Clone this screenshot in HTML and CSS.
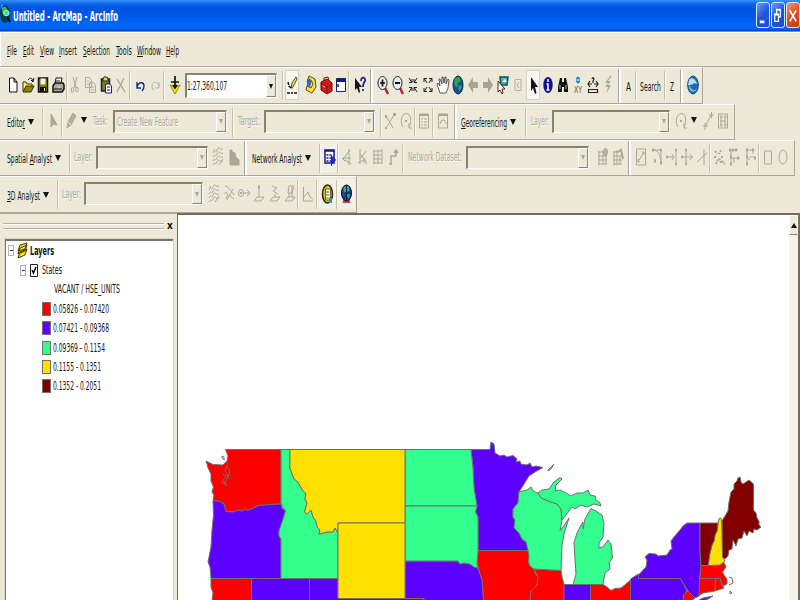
FILE: index.html
```html
<!DOCTYPE html>
<html lang="en">
<head>
<meta charset="utf-8">
<title>Untitled - ArcMap - ArcInfo</title>
<link rel="stylesheet" href="styles.css">
</head>
<body>
<header class="titlebar">
  <svg class="app-icon" viewBox="0 0 12 22"><ellipse cx="5.500" cy="11" rx="5.500" ry="9.500" fill="#063c4b"/><path d="M2 4 6 3 9 8 6 13 3 11Z" fill="#26c454"/><circle cx="7" cy="10" r="3" fill="#50db8a" stroke="#c3f5dd"/><path d="m8 14 3 6" stroke="#021433" stroke-width="2"/><path d="M1 3 3 1" stroke="#cbe" /></svg>
  <h1 class="fit" data-w="105">Untitled - ArcMap - ArcInfo</h1>
  <div class="window-buttons">
    <svg class="wbtn" viewBox="0 0 13 26"><path d="M3 19h5v3H3z" fill="#fff"/></svg>
    <svg class="wbtn" viewBox="0 0 13 26"><path d="M5 11V7h4v8H7M3 12h4v8H3z" fill="none" stroke="#fff" stroke-width="1.300"/><path d="M5 7.500h4M3 12.500h4" stroke="#fff" stroke-width="2"/></svg>
    <svg class="wbtn close" viewBox="0 0 13 26"><path d="m3 8 7 12M10 8 3 20" stroke="#fff" stroke-width="1.700"/></svg>
  </div>
</header>
<nav class="menu">
  <span class="fit" data-w="10"><u>F</u>ile</span><span class="fit" data-w="11"><u>E</u>dit</span><span class="fit" data-w="14"><u>V</u>iew</span><span class="fit" data-w="18"><u>I</u>nsert</span><span class="fit" data-w="27"><u>S</u>election</span><span class="fit" data-w="16"><u>T</u>ools</span><span class="fit" data-w="24"><u>W</u>indow</span><span class="fit" data-w="13"><u>H</u>elp</span>
</nav>

<section class="bar standard">
  <svg><use href="#new"/></svg><svg><use href="#open"/></svg><svg><use href="#save"/></svg><svg><use href="#print"/></svg><i class="sep"></i>
  <svg><use href="#cut"/></svg><svg><use href="#copy"/></svg><svg><use href="#paste"/></svg><svg><use href="#delete"/></svg><i class="sep"></i>
  <svg><use href="#undo"/></svg><svg><use href="#redo"/></svg><i class="sep"></i>
  <svg><use href="#add"/></svg>
  <div class="combo live"><span class="fit" data-w="40">1:27,360,107</span><b></b></div><i class="sep"></i>
  <svg class="pressed"><use href="#sketch"/></svg><svg><use href="#catalog"/></svg><svg><use href="#toolbox"/></svg><svg class="commands"><use href="#window"/></svg><i class="sep"></i>
  <svg><use href="#help"/></svg><i class="grip"></i>
  <svg><use href="#zoomin"/></svg><svg><use href="#zoomout"/></svg><svg><use href="#fixin"/></svg><svg><use href="#fixout"/></svg><svg><use href="#hand"/></svg><svg><use href="#globe"/></svg><svg><use href="#back"/></svg><svg><use href="#forward"/></svg><svg><use href="#select"/></svg><svg><use href="#unselect"/></svg>
  <svg class="pressed"><use href="#pointer"/></svg><svg><use href="#info"/></svg><svg><use href="#find"/></svg><svg><use href="#xy"/></svg><svg><use href="#measure"/></svg><svg><use href="#bolt"/></svg><i class="grip inset"></i>
  <span class="fit mid" data-w="5">A</span><i class="sep"></i><span class="fit mid" data-w="21">Search</span><i class="sep"></i><span class="fit mid" data-w="4">Z</span><i class="grip inset"></i>
  <svg><use href="#earth"/></svg>
</section>

<section class="bar editor">
  <span class="fit" data-w="18">Edito<u>r</u></span><b class="arrow"></b><i class="sep"></i>
  <svg class="off"><use href="#play"/></svg><i class="sep"></i><svg class="off"><use href="#pencil"/></svg><b class="arrow up"></b>
  <span class="fit dim" data-w="15">Task:</span><div class="combo"><span class="fit dim" data-w="61">Create New Feature</span><b></b></div><i class="sep"></i>
  <span class="fit dim" data-w="22">Target:</span><div class="combo"><b></b></div><i class="sep"></i>
  <svg class="off"><use href="#split"/></svg><svg class="off"><use href="#rotate"/></svg><i class="sep"></i><svg class="off"><use href="#table"/></svg><i class="sep"></i><svg class="off"><use href="#props"/></svg><i class="grip inset"></i>
  <span class="fit" data-w="46"><u>G</u>eoreferencing</span><b class="arrow"></b><i class="sep"></i>
  <span class="fit dim" data-w="18">Layer:</span><div class="combo"><b></b></div>
  <svg class="off"><use href="#rotate"/></svg><b class="arrow up"></b><svg class="off"><use href="#link"/></svg><svg class="off"><use href="#table2"/></svg>
</section>

<section class="bar spatial">
  <span class="fit" data-w="45">Spatial <u>A</u>nalyst</span><b class="arrow"></b><i class="sep"></i>
  <span class="fit dim" data-w="19">Layer:</span><div class="combo"><b></b></div><svg class="off"><use href="#contour"/></svg><svg class="off"><use href="#histogram"/></svg><i class="grip inset"></i>
  <span class="fit" data-w="50">Network Analyst</span><b class="arrow"></b><i class="sep"></i>
  <svg class="lit"><use href="#nawindow"/></svg><i class="sep"></i>
  <svg class="off"><use href="#na1"/></svg><svg class="off"><use href="#na2"/></svg><svg class="off"><use href="#grid"/></svg><svg class="off"><use href="#route"/></svg><i class="sep"></i>
  <span class="fit dim" data-w="54">Network Dataset:</span><div class="combo"><b></b></div>
  <svg class="off"><use href="#gridid"/></svg><svg class="off"><use href="#gridbuild"/></svg><i class="grip inset"></i>
  <svg class="off"><use href="#t1"/></svg><svg class="off"><use href="#t2"/></svg><svg class="off"><use href="#t3"/></svg><svg class="off"><use href="#t4"/></svg><svg class="off"><use href="#t5"/></svg><i class="sep"></i>
  <svg class="off"><use href="#t6"/></svg><svg class="off"><use href="#t7"/></svg><svg class="off"><use href="#t8"/></svg><i class="sep"></i>
  <svg class="off"><use href="#rect"/></svg><svg class="off"><use href="#oval"/></svg>
</section>

<section class="bar three-d">
  <span class="fit" data-w="33"><u>3</u>D Analyst</span><b class="arrow"></b><i class="sep"></i>
  <span class="fit dim" data-w="19">Layer:</span><div class="combo"><b></b></div>
  <svg class="off"><use href="#contour"/></svg><svg class="off"><use href="#steep"/></svg><svg class="off"><use href="#sight"/></svg><svg class="off"><use href="#point3d"/></svg><svg class="off"><use href="#line3d"/></svg><svg class="off"><use href="#poly3d"/></svg><i class="sep"></i>
  <svg class="off"><use href="#profile"/></svg><i class="sep"></i><svg class="lit"><use href="#scene"/></svg><i class="sep"></i><svg class="lit"><use href="#arcglobe"/></svg>
</section>

<main class="workspace">
  <aside class="toc">
    <div class="toc-head"><div class="rails"></div><span class="toc-close">x</span></div>
    <div class="tree">
      <div class="row root"><i class="minus"></i><svg class="layers" viewBox="0 0 11 17"><path d="m3 10 7-3-2 6-7 3zM3 6l7-3-2 6-7 3zM3 3l7-2-2 6-7 2z" fill="#ffe600" stroke="#443a00"/></svg><strong class="fit" data-w="24">Layers</strong></div>
      <div class="row layer"><i class="minus"></i><svg class="check" viewBox="0 0 8 13"><path d="M.5.500h7v12h-7z" fill="#fff" stroke="#222"/><path d="m2 6 1.500 3L6 3" fill="none" stroke="#000" stroke-width="1.500"/></svg><span class="fit" data-w="20">States</span></div>
      <div class="row field"><span class="fit" data-w="66">VACANT / HSE_UNITS</span></div>
      <div class="row cls"><i class="swatch red"></i><span class="fit" data-w="56">0.05826 - 0.07420</span></div>
      <div class="row cls"><i class="swatch violet"></i><span class="fit" data-w="56">0.07421 - 0.09368</span></div>
      <div class="row cls"><i class="swatch green"></i><span class="fit" data-w="52">0.09369 - 0.1154</span></div>
      <div class="row cls"><i class="swatch yellow"></i><span class="fit" data-w="48">0.1155 - 0.1351</span></div>
      <div class="row cls"><i class="swatch maroon"></i><span class="fit" data-w="48">0.1352 - 0.2051</span></div>
    </div>
  </aside>
  <div class="map">
    <svg class="states" viewBox="178 215 611 385">
      <g class="red">
        <path d="M225.500 449.500H281V504L270 504.500 259 505.500 252 508.500 248 510.500 245 509.500 242 511 238 510 234 512 226 511.500 224 504 220 501.500 213 500.500 214 495 212 492 213.500 487 211 481 211 474 208 468 207 464 206 461 209 462.500 213 464.500 223 465 227 461 228 456z"/>
        <path d="M211 578.500H251.500V601H212L213 593 211 587z"/>
        <path d="M478 550.500H528L529 556 528.500 562 530 566 534 569 535 573 538 577 538 582 534 589 531 591 530 601H483.500L482 580 479 570 477 563z"/>
        <path d="M534 569 561 570.500 562 577 564 584.500V601H530L531 591 537 585 538 577z"/>
        <path d="M590.500 584.500H603L607 587 611 590.500 615 588.500 621 588 626 584 630.500 580V601H590.500z"/>
        <path d="M683 601 684 593 688 591 695 598 691 601z"/>
        <path d="M700 565.500 720 565 724 562.500 726 567 722.500 572 724 575 727 579 727 584 723 586 720 578.500H700z"/>
        <path d="M699.500 578.500H716L715 591 703 593 697 597z"/><path d="m716 578.500 4-.5 2 7 2 3-9 3z"/>
      </g>
      <g class="violet">
        <path d="M213 500.500 220 501.500 224 504 226 511.500 234 512 238 510 242 511 245 509.500 248 510.500 252 508.500 259 505.500 270 504.500 281 504 282 508 285.500 511 283 519 279 531 279 536 281 539V578.500H211L210 567 208 562 211 547 212 530 213.500 515z"/>
        <path d="M251.500 578.500h58V601h-58zM309.500 578.500H338V598.500H424V601H309.500z"/>
        <path d="M405 561H458L460 564 464 563 470 564 474 567 478 568 482 580 483.500 601H424V598.500H405z"/>
        <path d="M471 449.500H490L491 442 494 444 495 453 500 456 504 455 507 457 513 455.500 517 459 516 462 520 461 521 464 527 465 530 463 532 467 536 466 543 467.500 535 472 529 476 524 484 519 492 518 503 513 509 513 517 515 520 514 528 519 533 522 539 526 542 528 550.500H478V517L475.500 512 477 506 474 488 473 468z"/>
        <path d="M564 584.500h26.500V601H564z"/>
        <path d="M687 523H700V551L701 565.500 699.500 578.500 699 596 695 598 688 591 684 585 680.500 578.500H638.500V575L646 567 647 560 645 557 649 553.500 656 554 658 556 667 555 670 550 672 549 671 541 674 537 680 530 683 526z"/>
        <path d="M630.500 579 638.500 574V578.500H680.500L684 585 687 591 683 596 684 601H630.500z"/>
        <path d="m697 601 6-3 10-2-5 3-5 2z"/>
      </g>
      <g class="green">
        <path d="M281 449.500H290V468L294 479 298 482 303 491 306 493.500 305 499 307 503 304.500 512 307 514 311 510 313 517 316 521 317 527 320 530 319 534 327 532 333 532 335 528 338 533V578.500H281V539L279 536 279 531 283 519 285.500 511 281 504z"/>
        <path d="M405 449.500H471L473 468 474 488 477 506H405z"/>
        <path d="M405 506H477L475.500 512 478 517V550.500L477 563 478 568 474 567 470 564 464 563 460 564 458 561H405z"/>
        <path d="M519 492 527 490 531 487 533 491 538 493 541 498 551 502 557 504 561 509 562 520 560 531 563 527 569 518 564 534 562 545 561 570.500 534 569 530 566 528.500 562 529 556 528 550.500 526 542 522 539 519 533 514 528 515 520 513 517 513 509 518 503z"/>
        <path d="M538 493 542 490 549 489 554 482 560 477.500 562 479 556 485 555 491 560 490 566 493 571 496 577 493 583 493 588 490 590 495 595 496 596 500 600 503 601 506 594 504 587 507 581 505 575 509 572 507 566 515 562 520 561 509 557 504 551 502 541 498z"/>
        <path d="M591 508.500 596 511 602 515 604 524 603 537 599 543 599 548 603 547 608 540 611 544 612.500 558 609 563 610 569 605 573 603 584.500H573L576 574 575 560 574 543 577 533 581 525 583 522 583 529 585 519z"/>
        <path d="m548 470 6-6-3 5-3 2z"/>
      </g>
      <g class="yellow">
        <path d="M290 449.500H405V523H338V533L335 528 333 532 327 532 319 534 320 530 317 527 316 521 313 517 311 510 307 514 304.500 512 307 503 305 499 306 493.500 303 491 298 482 294 479 290 468z"/>
        <path d="M338 523h67v75.500h-67z"/>
        <path d="M718 523 719 518.500 721 518 722 523 722.500 557 725 561 720 565 708 565.500 710 553 712 545 714 541 715 535 717 531z"/>
      </g>
      <g class="maroon">
        <path d="M700 523H718L717 531 715 535 714 541 712 545 710 553 708 565.500H701L700 551z"/>
        <path d="M722.500 557 722 521 725 516 728 511 729 502 731 492 734 489 734 484 737 481 738 478 740 477 741 482 743 484 749 480 753.500 484 753.500 510 756 513 757 518 759 521 759 525 761 527 757 530 754 529 753 533 749 531 747 536 744 531 742 538 738 539 736 546 733 540 732 549 729 550 728 556 725 559z"/>
      </g>
      <g class="coast"><path d="m222 456 2 1v3l-2-2zM226 462l2 3-3 5 3 5-5 5 3 5-5-3M227 467l3 3-2 9M223 474l5 3-3 5 2 4M729 577l3 1 1 5-4 2M730 591l2 2-2 1z"/></g>
    </svg>
    <div class="scroll"><div class="scroll-up"></div></div>
  </div>
</main>

<svg class="defs">
  <symbol id="new" viewBox="0 0 14 22"><path d="M3.500 4h4.500l3 4v10H3.500zM8 4v4h3" fill="#fff" stroke="#111"/></symbol>
  <symbol id="open" viewBox="0 0 14 22"><path d="M2 17V8h3l1 2h5v3" fill="#ffff7a" stroke="#332f00"/><path d="m2 18 3-6h8l-3 6z" fill="#8b8500" stroke="#332f00"/><path d="M7 6c2-3 4-2 5 1m-2-1 2 2 1-4" fill="none" stroke="#111"/></symbol>
  <symbol id="save" viewBox="0 0 14 22"><path d="M2.500 4h9v14h-9z" fill="#807b00" stroke="#111" stroke-width="1.500"/><path d="M4.500 4.500h5v6h-5z" fill="#eee"/><path d="M4 13h6v5H4z" fill="#111"/><path d="M8 14h1v3H8z" fill="#fff"/></symbol>
  <symbol id="print" viewBox="0 0 14 22"><path d="m4 10 1-6h6l-1 6" fill="#fff" stroke="#111"/><path d="m2 12 2-3h8l1 2v4l-2 3H2z" fill="#aaa" stroke="#111" stroke-width="1.500"/><path d="M3 15h8M5 7h4" stroke="#111"/><path d="M7 13h2" stroke="#ee0" stroke-width="1.500"/></symbol>
  <symbol id="cut" viewBox="0 0 14 22"><path d="m5 3 3 11m1-11L6 14" stroke="#aaa898"/><ellipse cx="4.500" cy="16" rx="1.300" ry="2.500" fill="none" stroke="#aaa898"/><ellipse cx="9" cy="15.500" rx="1.300" ry="2.500" fill="none" stroke="#aaa898"/></symbol>
  <symbol id="copy" viewBox="0 0 14 22"><path d="M2.500 3.500h4l2 3v7h-6zM6.500 8.500h4l2 3v7h-6z" fill="#ece9d8" stroke="#aaa898"/><path d="M4 7h2M4 10h2M8 13h3M8 16h3" stroke="#aaa898"/></symbol>
  <symbol id="paste" viewBox="0 0 14 22"><path d="M2.500 5h8v12h-8z" fill="#7d7a20" stroke="#222" stroke-width="1.500"/><path d="M4 7V5l1-2h3l1 2v2z" fill="#ddd86a" stroke="#222"/><path d="M6.500 10h4l2 2v7h-6z" fill="#fff" stroke="#0b1d96"/><path d="M8 13h3M8 16h3" stroke="#0b1d96"/></symbol>
  <symbol id="delete" viewBox="0 0 14 22"><path d="m3 5 8 13M10 4 3 18" stroke="#a5a292" stroke-width="1.300"/></symbol>
  <symbol id="undo" viewBox="0 0 14 22"><path d="M4 13c2-6 7-5 7-1 0 3-1 4-2 5M4 8v6h4" fill="none" stroke="#102ba8" stroke-width="1.400"/></symbol>
  <symbol id="redo" viewBox="0 0 14 22"><path d="M10 12C8 6 3 8 3 12c0 3 1 4 2 4M10 8v6H6" fill="none" stroke="#b4b1a2"/></symbol>
  <symbol id="add" viewBox="0 0 14 22"><path d="m2 11 5 9 5-9-5 2z" fill="#ffe800" stroke="#99890a"/><path d="M7 2v11M3 8h8M5 11l2 3 2-3" fill="none" stroke="#111" stroke-width="1.700"/></symbol>
  <symbol id="sketch" viewBox="0 0 14 22"><path d="m6 14 1-5 4-6 1 2-4 8z" fill="#ffe64f" stroke="#443"/><path d="m3 8 1 4 3 3M2 19h3m1 0h2m1 0h3" stroke="#111" stroke-width="1.500" fill="none" stroke-dasharray="3 1"/></symbol>
  <symbol id="catalog" viewBox="0 0 14 22"><path d="m3 8 2-6 6 3 1 8-4 6-6-3 1-4 4 2 2-4-2-4z" fill="#ffe23b" stroke="#594e08"/><path d="m3 8 2-4 3 3-2 6-3-1z" fill="#396ab5"/></symbol>
  <symbol id="toolbox" viewBox="0 0 14 22"><path d="m2 8 6-3 5 4v8l-5 3-6-4z" fill="#d91717" stroke="#6b0808"/><path d="M5 7V4l4-1 1 4M3 9l5 4 5-3M8 13v6" fill="none" stroke="#711"/><path d="m4 12 2 1" stroke="#fff"/></symbol>
  <symbol id="window" viewBox="0 0 14 22"><path d="M2.500 4.500h9v13h-9z" fill="#fff" stroke="#112475"/><path d="M2 5h10v3H2z" fill="#112475"/><path d="M4 10v3" stroke="#112475" stroke-width="1.500"/></symbol>
  <symbol id="help" viewBox="0 0 14 22"><path d="m2 4v12l2-2 2 5 1-1-1-5h3z" fill="#111"/><path d="M8 7c0-5 5-4 4 0-1 2-2 2-2 6m0 2v2" fill="none" stroke="#141d8d" stroke-width="1.700"/></symbol>
  <symbol id="zoomin" viewBox="0 0 14 22"><path d="m9 14 3 6" stroke="#b4242c" stroke-width="2.500"/><ellipse cx="6.500" cy="9" rx="4.500" ry="6.500" fill="#e8ecef" stroke="#222"/><path d="M4 9h5M6.500 5.500v7" stroke="#111" stroke-width="1.700"/></symbol>
  <symbol id="zoomout" viewBox="0 0 14 22"><path d="m9 14 3 6" stroke="#b4242c" stroke-width="2.500"/><ellipse cx="6.500" cy="9" rx="4.500" ry="6.500" fill="#e8ecef" stroke="#222"/><path d="M4 9h5" stroke="#111" stroke-width="2"/></symbol>
  <symbol id="fixin" viewBox="0 0 14 22"><path d="m3 4 2.500 4M11 4 8.500 8M3 18l2.500-4M11 18l-2.500-4M3 8.500h3V5M11 8.500H8V5M3 13.500h3V17M11 13.500H8V17" fill="none" stroke="#222"/></symbol>
  <symbol id="fixout" viewBox="0 0 14 22"><path d="m3 4 3 5M11 4 8 9M3 18l3-5M11 18l-3-5M3 8V4.500h3M11 8V4.500H8M3 14v3.500h3M11 14v3.500H8" fill="none" stroke="#222"/></symbol>
  <symbol id="hand" viewBox="0 0 14 22"><path d="m4 19-2-6-1-3 1-1 2 3-1-7h1l2 5V3h1l1 6 1-6h1v7l2-5 1 1-1 8-2 5z" fill="#fff" stroke="#333" stroke-width=".8"/></symbol>
  <symbol id="globe" viewBox="0 0 14 22"><ellipse cx="7" cy="11" rx="5" ry="9" fill="#174da3" stroke="#10264d"/><path d="m4 4 4-1 2 4-3 2-1 5-3-4zM8 11l3 1-2 5-2-2z" fill="#2ba64b"/></symbol>
  <symbol id="back" viewBox="0 0 14 22"><path d="m2 11 5-8v5h5v6H7v5z" fill="#a7a493"/></symbol>
  <symbol id="forward" viewBox="0 0 14 22"><path d="m12 11-5-8v5H2v6h5v5z" fill="#a7a493"/></symbol>
  <symbol id="select" viewBox="0 0 14 22"><path d="M4 3h8l-1 8H5z" fill="#36c1c9" stroke="#174950" stroke-width="1.500"/><path d="m6 8 3-3 2 3z" fill="#fff"/><path d="M2 7v11l2-2 2 4 1-1-1-4h3z" fill="#fff" stroke="#522"/></symbol>
  <symbol id="unselect" viewBox="0 0 14 22"><path d="M4 5.500h6v11H4zM8 8l-2 3 2 3" fill="none" stroke="#b3b09f"/></symbol>
  <symbol id="pointer" viewBox="0 0 14 22"><path d="M5 3v14l2-3 2 6 1.500-1L9 13h3z" fill="#111"/></symbol>
  <symbol id="info" viewBox="0 0 14 22"><ellipse cx="7" cy="11" rx="4.700" ry="8" fill="#12138f"/><path d="M7 5v3M5.500 10H7v6m-1.500 0h3" fill="none" stroke="#fff" stroke-width="1.500"/></symbol>
  <symbol id="find" viewBox="0 0 14 22"><path d="M4 4h2v4h2V4h2l2 9v5H8v-5H6v5H2v-5z" fill="#151515"/><path d="M4 11v4M10 11v4" stroke="#bbb"/></symbol>
  <symbol id="xy" viewBox="0 0 14 22"><ellipse cx="7" cy="6" rx="2" ry="3.500" fill="#2387d8"/><path d="M5.500 6h3" stroke="#fff"/><text x="3" y="19" font-size="8" textLength="8" lengthAdjust="spacingAndGlyphs" fill="#665138">XY</text></symbol>
  <symbol id="measure" viewBox="0 0 14 22"><path d="M2.500 15.500h9v3h-9zM2 10h4m2 0h4M4 7l-2 3 2 3m6-6 2 3-2 3M6 5c1-3 3 0 1 2v2" fill="none" stroke="#222" stroke-width="1.200"/></symbol>
  <symbol id="bolt" viewBox="0 0 14 22"><path d="M9 2 4 9h3l-3 4h3l-2 7 5-9H7l3-4H7l4-5z" fill="#b0ad9d"/></symbol>
  <symbol id="earth" viewBox="0 0 14 22"><ellipse cx="7" cy="11" rx="5.300" ry="9" fill="#1a6db4" stroke="#17477c"/><path d="M3 6c3-4 7 0 8 4-2-1-4-1-5 1-1-1-3 1-4 0z" fill="#b5dcf0"/><path d="M4 12c1 4 5 5 7 3-2 4-8 4-8-3z" fill="#7db5de"/></symbol>

  <symbol id="play" viewBox="0 0 14 22"><path d="M5 4v13l2-3 4 1z" fill="#aaa798"/></symbol>
  <symbol id="pencil" viewBox="0 0 14 22"><path d="m3 18 1-6 5-9 3 3-5 9z" fill="#b2af9f"/><path d="m4 12 3 3" stroke="#ece9d8"/></symbol>
  <symbol id="split" viewBox="0 0 14 22"><path d="m3 18 8-13M3 6l7 12"/><path d="M10 4h2v2M3 5v3M2 18h2" stroke-width="2"/></symbol>
  <symbol id="rotate" viewBox="0 0 14 22"><path d="M4 17C1 13 2 4 7 3.500S13 12 10 17M10 13v5h3"/><path d="M6 11h2" stroke-width="2"/></symbol>
  <symbol id="table" viewBox="0 0 14 22"><path d="M2.500 4h9v14h-9zM4 9h2m1 0h3M4 12h2m1 0h3M4 15h2m1 0h3"/><path d="M2 5h10" stroke-width="2"/></symbol>
  <symbol id="table2" viewBox="0 0 14 22"><path d="M2.500 4h9v14h-9zM4 7h3m1 0h3M4 11h6M4 15h3m1 0h3M5 5v12M9 5v12"/></symbol>
  <symbol id="props" viewBox="0 0 14 22"><path d="M2.500 4h9v14h-9zM4 14l2-4h2l3 4"/><path d="M2 5h10" stroke-width="2"/></symbol>
  <symbol id="link" viewBox="0 0 14 22"><path d="m4 17 6-12M2 16h5M4 13v7M8 5h5M10.500 2v6"/></symbol>
  <symbol id="contour" viewBox="0 0 14 22"><path d="M2 7c2-5 2 2 4-3s3 1 6-1M2 11c2-5 2 2 4-3s3 1 6-1M2 15c2-5 2 2 4-3s3 1 6-1M2 19c2-5 2 2 4-3s3 1 6-1M8 19l4-6M4 3 2 5"/></symbol>
  <symbol id="histogram" viewBox="0 0 14 22"><path d="M3 19V4h2v2l3 1 1 4 3 3v5z" fill="#aaa798"/></symbol>
  <symbol id="nawindow" viewBox="0 0 14 22"><path d="M2.500 4h9v13h-9z" fill="#fff" stroke="#15148f" stroke-width="1.500"/><path d="M2 5h10M4 9h2m1 0h2M4 12h2m1 0h2M4 15h2m1 0h2" stroke="#15148f" stroke-width="1.500"/><path d="M9 9v11M9 10l4 4-4 4" fill="#2626d8" stroke="#2020c0"/></symbol>
  <symbol id="na1" viewBox="0 0 14 22"><path d="m3 13 7-9M9 3v16M3 12h8M5 14l6 4M2 12l3 3"/></symbol>
  <symbol id="na2" viewBox="0 0 14 22"><path d="M4 3v15M4 8l7 8M4 13l6-8M2 17l5-3 4 4M8 12v5"/></symbol>
  <symbol id="grid" viewBox="0 0 14 22"><path d="M2 5h9M2 9h9M2 13h9M2 17h9M3 4v14M7 4v14M11 3v15"/></symbol>
  <symbol id="route" viewBox="0 0 14 22"><path d="M4 18v-8h5V4M7 7l2-3 2 3M2 18h3" stroke-width="1.500"/></symbol>
  <symbol id="gridid" viewBox="0 0 14 22"><path d="M2 6h6M2 10h9M2 14h9M2 18h9M3 5v14M7 4v15M10 9v10"/><ellipse cx="9.500" cy="6" rx="2" ry="3.500" fill="#b6b3a4"/></symbol>
  <symbol id="gridbuild" viewBox="0 0 14 22"><path d="M2 6h5M2 10h9M2 14h9M2 18h9M3 5v14M6 4v15M9 11v8"/><path d="m7 6 3-2 2 9" stroke-width="2"/></symbol>
  <symbol id="t1" viewBox="0 0 14 22"><path d="M2.500 3h9v16h-9zM4 16l6-10M8 6h2v3M4 13v3h2"/></symbol>
  <symbol id="t2" viewBox="0 0 14 22"><path d="M2 4h9M4 4c5 1 6 5 7 12M11 4v14M4 14h2"/><path d="M2 4h2M10 4h2M10 17h2M4 15h2" stroke-width="3"/></symbol>
  <symbol id="t3" viewBox="0 0 14 22"><path d="M1 11h8M11 3v16M7 8l2 3-2 3"/><path d="M1 11h2M10 4h2M10 18h2" stroke-width="2.500"/></symbol>
  <symbol id="t4" viewBox="0 0 14 22"><path d="M2 11h11M6 4v15M10 8l2 3-2 3"/><path d="M5 4h2M5 18h2M1 11h2" stroke-width="2.500"/></symbol>
  <symbol id="t5" viewBox="0 0 14 22"><path d="m2 16 10-9M9 3v16"/></symbol>
  <symbol id="t6" viewBox="0 0 14 22"><path d="m3 5 2 3m4-4L7 8m-5 3h3m4 0h3M4 18l2-5m3 4-2-5m3 3 3 3" stroke-width="2" stroke-dasharray="2 1"/></symbol>
  <symbol id="t7" viewBox="0 0 14 22"><path d="M3 4h8M4 4v15M4 12h9M7 12v5"/><path d="M2 4h2m1 0h2m1 0h2M3 11h2M3 18h2M10 12h2" stroke-width="3"/></symbol>
  <symbol id="t8" viewBox="0 0 14 22"><path d="M4 18V4h6v4M6 14c0-4 3-4 6-2"/><path d="M3 4h2m4 0h2M3 11h2M3 18h2M11 12h2" stroke-width="3"/></symbol>
  <symbol id="rect" viewBox="0 0 14 22"><path d="M3.500 5h7v13h-7z"/></symbol>
  <symbol id="oval" viewBox="0 0 14 22"><ellipse cx="7" cy="11" rx="4" ry="7"/></symbol>
  <symbol id="steep" viewBox="0 0 14 22"><path d="M3 3c3 0 6 5 9 9M2 11c3-4 5 0 2 5M5 17l6-11M7 12l5 4"/></symbol>
  <symbol id="sight" viewBox="0 0 14 22"><path d="M6 10h6m-2-3 3 3-3 3"/><ellipse cx="4" cy="10" rx="2.500" ry="3.500"/><path d="M4 9v2" stroke-width="2"/></symbol>
  <symbol id="point3d" viewBox="0 0 14 22"><path d="m2 18 3-4h7l-3 4zM7 5v9"/><path d="M6 4h2" stroke-width="3"/></symbol>
  <symbol id="line3d" viewBox="0 0 14 22"><path d="m2 18 3-4h7l-3 4zM4 3l5 2-4 3 5 3M7 11v3"/></symbol>
  <symbol id="poly3d" viewBox="0 0 14 22"><path d="m2 18 3-4h7l-3 4zM5 10l1-7h5l-2 7zM6 10v4M9 4v10"/></symbol>
  <symbol id="profile" viewBox="0 0 14 22"><path d="M2.500 4v14H12M3 14l4-5 2 5 3 2"/></symbol>
  <symbol id="scene" viewBox="0 0 14 22"><ellipse cx="7" cy="11" rx="5" ry="9" fill="#d3c51e" stroke="#28250b" stroke-width="1.500"/><path d="M5 6h5v11H5z" fill="#fff" stroke="#6c6524"/><path d="M5 9h4M5 12h4M5 15h4" stroke="#6c6524"/><path d="M10 15v5" stroke="#219ac4" stroke-width="3"/></symbol>
  <symbol id="arcglobe" viewBox="0 0 14 22"><path d="m4 16-1 4h8l-1-4" fill="#cf3c31"/><ellipse cx="7" cy="10" rx="5" ry="8" fill="#153f9b" stroke="#111"/><path d="m4 4 5-1 1 5-4 1-2 3M7 12l4-2-2 6z" fill="#2aab90"/><path d="M2.500 10h9M7 2v16" stroke="#122749"/></symbol>
</svg>
<script src="fit.js"></script>
</body>
</html>
```
FILE: styles.css
```css
* { box-sizing: border-box; }
body {
  margin: 0;
  width: 800px;
  height: 600px;
  overflow: hidden;
  display: flex;
  flex-direction: column;
  background: #ece9d8;
  color: #151515;
  font: 13px/16px "DejaVu Sans Condensed", "DejaVu Sans", sans-serif;
}
.defs { display: none; }
.fit { display: block; white-space: nowrap; transform-origin: 0 50%; }
u { text-underline-offset: 1px; text-decoration-thickness: 1px; }

.titlebar {
  flex: 0 0 32px;
  display: flex;
  align-items: center;
  gap: 2px;
  color: #fff;
  background: linear-gradient(#3a93ff 0, #0c62e8 4px, #0054e0 9px, #0058e8 16px, #0066ff 25px, #0060f4 29px, #003dba 31px, #e8e5d6 32px);
}
.app-icon { width: 11px; height: 24px; margin-bottom: 4px; }
h1 { margin: 0; font-size: 14px; font-weight: bold; line-height: 20px; }
.window-buttons { display: flex; gap: 1px; margin: 0 0 2px auto; }
.wbtn {
  width: 14px;
  height: 26px;
  border: 1px solid #dce8ff;
  border-radius: 3px;
  background: linear-gradient(135deg, #6b9cf8, #2056dc 50%, #1c4bc8);
}
.close { background: linear-gradient(135deg, #f09a7c, #e14d24 50%, #c63a12); }

.menu {
  flex: 0 0 35px;
  display: grid;
  grid-template-columns: 16px 17px 19px 24px 33px 21px 29px 20px;
  align-items: center;
  padding: 3px 0 0 7px;
  border-top: 1px solid #fff;
  border-bottom: 1px solid #aca899;
  box-shadow: inset 1px 0 #fff;
}

.bar {
  flex: 0 0 auto;
  display: grid;
  align-items: center;
  justify-items: center;
  align-self: flex-start;
  border: solid;
  border-width: 1px 1px 1px 0;
  border-color: #fff #aca899 #aca899;
}
.bar > svg { width: 14px; height: 22px; margin-bottom: 2px; overflow: visible; }
.bar > .fit { justify-self: start; margin-top: 2px; }
.bar > .mid { justify-self: center; }
.bar > .dim { justify-self: center; margin-top: 0; margin-bottom: 2px; }
.bar > .commands { margin-left: 4px; }
.off { fill: none; stroke: #aaa798; stroke-width: 1; }
.bar > .pressed, .bar > .lit { background: #f8f7f1; height: 30px; padding: 4px 0; }
.bar > .pressed { outline: 1px solid #d4d1c2; outline-offset: -1px; }
.bar > .lit { width: 17px; background: #f3f1e6; }
.sep { width: 2px; height: 29px; border-left: 1px solid #c3c0b0; border-right: 1px solid #f8f7f0; justify-self: start; }
.grip { width: 3px; height: 34px; border-left: 1px solid #aca899; border-right: 2px solid #fff; justify-self: start; }
.inset { margin-left: 3px; }
.dim { color: #aaa798; text-shadow: 1px 1px #faf9f3; }
.arrow { border: solid transparent; border-width: 6px 3px 0; border-top-color: #111; justify-self: start; margin-left: 3px; }
.up { margin: 0 0 4px; justify-self: center; }

.combo {
  justify-self: start;
  display: flex;
  align-items: center;
  height: 23px;
  margin-bottom: 2px;
  padding-left: 2px;
  border: solid;
  border-width: 2px 1px 1px 2px;
  border-color: #85826f #fff #fff #85826f;
}
.combo b {
  display: grid;
  place-items: center;
  width: 10px;
  height: 100%;
  margin-left: auto;
  background: #ece9d8;
  border: 1px solid #fff;
  border-right-color: #85826f;
  border-bottom-color: #85826f;
}
.combo b::before { content: ""; border: solid transparent; border-width: 5px 2.5px 0; border-top-color: #aaa798; }
.live { width: 92px; height: 25px; margin: 0 0 0 1px; background: #fff; padding-left: 0; }
.live b::before { border-top-color: #111; }

.standard {
  height: 37px;
  width: 703px;
  padding-left: 5px;
  grid-template-columns:
    15px 15px 15px 16px 2px 14px 16px 15px 16px 2px 17px 15px 2px 19px
    98px 2px 15px 24px 6px 19px 2px 20px 5px
    15px 15px 15px 15px 15px 15px 15px 15px 15px 15px
    16px 14px 15px 15px 15px 15px 6px
    14px 2px 27px 2px 11px 6px 19px;
}
.editor {
  height: 36px;
  width: 735px;
  padding-left: 7px;
  grid-template-columns:
    18px 17px 2px 17px 2px 16px 9px 25px 119px 2px
    30px 116px 2px 15px 17px 2px 16px 2px 17px 10px
    46px 18px 2px 25px 120px 18px 8px 20px 10px;
}
.editor > .combo:nth-of-type(1) { width: 114px; }
.editor > .combo:nth-of-type(2) { width: 111px; }
.editor > .combo:nth-of-type(3) { width: 118px; }

.spatial {
  height: 36px;
  width: 795px;
  padding-left: 7px;
  grid-template-columns:
    45px 17px 2px 25px 114px 16px 15px 11px
    50px 17px 2px 16px 2px 16px 15px 15px 17px 2px
    62px 129px 15px 15px 8px 16px 15px 15px 15px 15px 2px
    15px 15px 17px 2px 15px 16px;
}
.spatial > .combo:nth-of-type(1) { width: 112px; }
.spatial > .combo:nth-of-type(2) { width: 123px; }
.three-d {
  height: 37px;
  width: 357px;
  padding-left: 7px;
  grid-template-columns: 33px 17px 2px 25px 122px 15px 15px 15px 16px 15px 15px 2px 17px 2px 18px 2px 17px;
}
.three-d > .combo { width: 119px; }

.workspace { flex: 1; min-height: 0; display: flex; }
.toc { width: 177px; display: flex; flex-direction: column; padding: 0 3px; border-top: 1px solid #aca899; }
.toc-head { display: flex; align-items: center; height: 25px; gap: 3px; padding-bottom: 2px; }
.rails { width: 163px; height: 6px; border: solid #b5b2a2; border-width: 1px 0; box-shadow: 0 1px #fff, inset 0 1px #fff; }
.toc-close { font-weight: bold; font-size: 10px; line-height: 12px; color: #111; width: 7px; }
.tree {
  flex: 1;
  width: 168px;
  margin-left: 2px;
  background: #fff;
  border-top: 2px solid #77746a;
  border-left: 1px solid #77746a;
  outline: 1px solid #d8d5c5;
}
.row { display: flex; align-items: center; height: 19.4px; }
.root { padding-left: 2px; }
.layer { padding-left: 14px; }
.field { padding-left: 48px; }
.cls { padding-left: 36px; }
.minus { width: 6px; height: 11px; border: 1px solid #b5b2a8; background: linear-gradient(#333, #333) center / 3px 1px no-repeat; }
.layers { width: 11px; height: 17px; margin: 0 2px 0 3px; }
.check { width: 8px; height: 13px; margin: 0 4px 0 4px; }
.swatch { width: 9px; height: 14px; margin-right: 2px; border: 1px solid #77705f; }
.swatch.red { background: #f00; }
.swatch.violet { background: #5c00ff; }
.swatch.green { background: #33ff8f; }
.swatch.yellow { background: #ffe000; }
.swatch.maroon { background: #800000; }

.map { flex: 1; display: flex; border: solid #716e61; border-width: 2px 2px 0 1px; background: #fff; }
.states { width: 611px; height: 385px; flex: none; }
.states path { stroke: #70706a; stroke-width: 1; stroke-linejoin: round; }
.states .red { fill: #f00; }
.states .violet { fill: #5c00ff; }
.states .green { fill: #33ff8f; }
.states .yellow { fill: #ffe000; }
.states .maroon { fill: #800000; }
.states .coast { fill: none; }
.scroll { flex: 1; background: #f5f3ea; }
.scroll-up { height: 20px; display: grid; place-items: center; background: #ece9d8; border: 1px solid #fff; border-bottom-color: #85826f; }
.scroll-up::before { content: ""; border: solid transparent; border-width: 0 3px 5px; border-bottom-color: #111; }
```
FILE: fit.js
```js
// Condense each label horizontally so it occupies the width its toolbar allots.
document.querySelectorAll('.fit').forEach(function (label) {
  var width = Number(label.dataset.w);
  label.style.width = 'max-content';
  var natural = label.getBoundingClientRect().width;
  label.style.transform = 'scaleX(' + width / natural + ')';
  label.style.marginRight = (width - natural) + 'px';
});
```
